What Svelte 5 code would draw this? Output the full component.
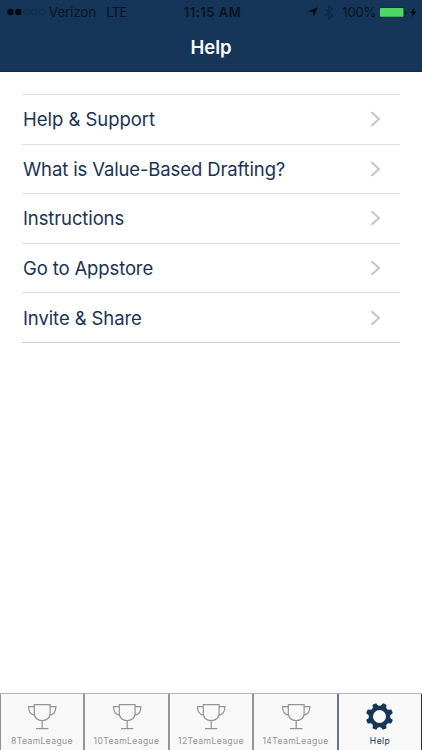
<script lang="ts">
	const rows = [
		{ label: 'Help & Support', spacing: -0.03 },
		{ label: 'What is Value-Based Drafting?', spacing: -0.13 },
		{ label: 'Instructions', spacing: -0.12 },
		{ label: 'Go to Appstore', spacing: -0.13 },
		{ label: 'Invite & Share', spacing: -0.1 }
	];
	const leagues = ['8TeamLeague', '10TeamLeague', '12TeamLeague', '14TeamLeague'];
	const teeth = [22.5, 67.5, 112.5, 157.5, 202.5, 247.5, 292.5, 337.5];
</script>

<div class="screen">
	<header>
		<div class="status">
			<div class="carrier">
				<svg class="signal" width="39" height="8" viewBox="0 0 39 8">
					<circle cx="3.5" cy="4" r="3.2" />
					<circle cx="11.3" cy="4" r="3.2" />
					<circle class="empty" cx="19.3" cy="4" r="2.9" />
					<circle class="empty" cx="27.1" cy="4" r="2.9" />
					<circle class="empty" cx="35" cy="4" r="2.9" />
				</svg>
				<span class="name">Verizon</span>
				<span class="network">LTE</span>
			</div>
			<span class="time">11:15 AM</span>
			<div class="power">
				<svg class="location" width="10" height="10" viewBox="0 0 10 10"><path d="M9.7.3 5.7 9.6 5 5 .3 4.3z" /></svg>
				<svg class="bluetooth" width="10" height="15" viewBox="0 0 10 15"><path d="M1 4.2 8.7 10.9 5 14V1l3.7 3.1L1 10.8" /></svg>
				<span class="percent">100%</span>
				<svg class="battery" width="28" height="11" viewBox="0 0 28 11">
					<rect x=".3" y=".3" width="24.8" height="10" rx="1.4" fill="#12263d" />
					<rect x=".9" y=".9" width="23.6" height="8.8" rx=".8" fill="#4cd964" />
					<path d="M25.9 3.3c2 .8 2 3.6 0 4.4z" fill="#080e17" />
				</svg>
				<svg class="bolt" width="7" height="11" viewBox="0 0 7 11"><path d="M4.5.2.4 6h2.4l-1 4.6L6.5 4.4H4z" /></svg>
			</div>
		</div>
		<h1>Help</h1>
	</header>

	<main>
		<ul>
			{#each rows as row}
				<li>
					<span style="letter-spacing: {row.spacing}px">{row.label}</span>
					<svg width="11" height="16" viewBox="0 0 11 16"><path d="m1.5 1.2 7.4 6.7-7.4 6.8" /></svg>
				</li>
			{/each}
		</ul>
	</main>

	<nav>
		{#each leagues as league}
			<div class="tab">
				<svg width="30" height="28" viewBox="0 0 30 28">
					<path d="M7.3 2.6h15.8v9.2c0 4-3.6 6.8-7.9 6.8s-7.9-2.8-7.9-6.8zM7.3 4.6H1.5c0 5 1.4 8 6 8.6M23.1 4.6h5.8c0 5-1.4 8-6 8.6M15.2 18.6v8M9 26.7h12.4" />
				</svg>
				<span>{league}</span>
			</div>
		{/each}
		<div class="tab active">
			<svg width="28" height="28" viewBox="-13.5 -14.5 28 28">
				<circle r="8.6" stroke-width="4.2" />
				{#each teeth as angle}
					<path class="tooth" transform="rotate({angle})" d="M-3.6-9.8q1.3-1 1.4-3 .1-.8.8-.8h2.8q.7 0 .8.8.1 2 1.4 3z" />
				{/each}
			</svg>
			<span>Help</span>
		</div>
	</nav>
</div>

<style>
	:global(body) { background: #fff; }
	.screen {
		display: flex; flex-direction: column; height: 750px; overflow: hidden;
		font-family: Inter, "Liberation Sans", sans-serif; color: #15355a;
	}
	svg { display: block; flex: none; }

	header { height: 72px; box-sizing: border-box; background: #153659; border-bottom: 1px solid #0f2c4c; }
	.status {
		display: grid; grid-template-columns: 1fr auto 1fr; align-items: center;
		height: 24px; font-size: 13px; line-height: 24px; color: #0a1420;
	}
	.carrier, .power { display: flex; align-items: center; }
	.carrier { padding-left: 7px; }
	.signal { fill: #050a11; }
	.empty { fill: none; stroke: #102840; stroke-width: 0.8; }
	.name { margin-left: 3px; letter-spacing: 0.1px; }
	.network { margin-left: 10px; letter-spacing: -0.6px; }
	.time { padding-left: 3px; font-weight: 600; letter-spacing: 0.5px; }
	.power { justify-content: flex-end; padding-right: 5px; }
	.location, .bolt { fill: #03070d; }
	.bluetooth { margin-left: 6px; fill: none; stroke: #10273f; stroke-width: 1.1; }
	.percent { margin-left: 8px; letter-spacing: -0.2px; }
	.battery { margin-left: 3px; }
	.bolt { margin-left: 3px; }
	h1 { margin: 0; font-size: 18.5px; line-height: 47px; font-weight: 600; text-align: center; color: #fff; }

	main { flex: 1; padding: 22px 22px 0; }
	ul { margin: 0; padding: 0; list-style: none; border-bottom: 1px solid #cfcfd1; }
	li {
		display: flex; align-items: center; justify-content: space-between; box-sizing: border-box;
		height: 49.6px; padding: 0 19px 0 1px; border-top: 1px solid #dedee0;
		font-size: 18.5px; color: #1a3353;
	}
	li path { fill: none; stroke: #c5c5ca; stroke-width: 2.1; }

	nav {
		display: grid; grid-template-columns: 85px 85px 84px 85px 83px; height: 57px;
		box-sizing: border-box; border-top: 1px solid #b5b5b5; background: #f8f8f8;
	}
	.tab {
		display: flex; flex-direction: column; align-items: center; box-sizing: border-box;
		padding-top: 8px; border-right: 2px solid #949494; color: #949494;
		font-size: 8.6px; line-height: 11px; letter-spacing: 0.38px;
	}
	.tab:first-child { border-left: 1px solid #949494; }
	.tab:nth-child(4) { border-right-color: #65758b; }
	.tab svg { fill: none; stroke: #939393; stroke-width: 1.2; }
	.tab span { margin-top: 6px; }
	.tab.active { border-right: 1px solid #153659; color: #153659; }
	.active svg { stroke: #153659; }
	.tab .tooth { fill: #153659; stroke: none; }
</style>
